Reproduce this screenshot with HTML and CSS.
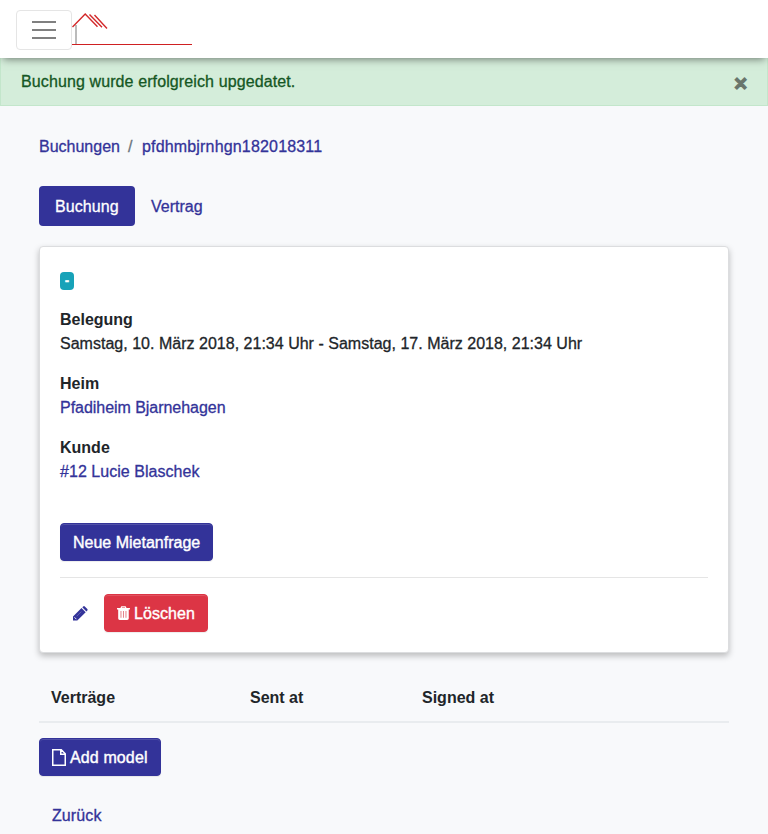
FILE: index.html
```html
<!DOCTYPE html>
<html lang="de">
<head>
<meta charset="utf-8">
<title>Buchung</title>
<link rel="stylesheet" href="styles.css">
</head>
<body>
<nav class="navbar">
  <button class="toggler" aria-label="Menü"><svg width="24" height="20" viewBox="0 0 24 20" stroke="#808080" stroke-width="2"><path d="M0 2H24M0 10H24M0 18H24"/></svg></button>
  <a class="brand" href="#"><svg width="120" height="38" viewBox="0 0 120 38" fill="none"><path d="M4 17V36" stroke="#aaa" stroke-width="1.6"/><path d="M.5 19 13.2 6 25.5 18.7M17.5 6.500 30 19.300M22.500 7 35 20.500" stroke="#d3292b" stroke-width="1.4"/><path d="M0 36.5H120" stroke="#cf2022"/></svg></a>
</nav>
<div class="alert"><span class="message">Buchung wurde erfolgreich upgedatet.</span><button class="close" aria-label="Schliessen"><span>×</span></button></div>
<main class="container">
  <div class="breadcrumb"><a href="#">Buchungen</a><span class="sep">/</span><a class="ref" href="#">pfdhmbjrnhgn182018311</a></div>
  <div class="pills"><a class="pill active" href="#">Buchung</a><a class="pill" href="#">Vertrag</a></div>
  <section class="card">
    <span class="badge">-</span>
    <dl>
      <dt>Belegung</dt><dd class="dates">Samstag, 10. März 2018, 21:34 Uhr - Samstag, 17. März 2018, 21:34 Uhr</dd>
      <dt>Heim</dt><dd><a class="home" href="#">Pfadiheim Bjarnehagen</a></dd>
      <dt>Kunde</dt><dd><a class="customer" href="#">#12 Lucie Blaschek</a></dd>
    </dl>
    <a class="btn w-new" href="#"><span>Neue Mietanfrage</span></a>
    <hr>
    <div class="actions">
      <a class="edit" href="#" aria-label="Bearbeiten"><svg width="15" height="15" viewBox="0 0 15 15"><path d="M0 14.500V10.500L8.500 2l4.200 4.200-8.400 8.300zM9.300 1.200 10.200.4q.8-.6 1.600 0l2.500 2.500q.7.8 0 1.600l-.9 1z" fill="currentColor"/><path d="M1.500 11.300 3.400 13.200" stroke="#fff" stroke-width=".9"/><path d="M3.600 10.300 8.300 5.600" stroke="#8585c4" stroke-width=".6"/></svg></a>
      <a class="btn danger" href="#"><svg width="13" height="16" viewBox="0 0 13 16" fill="none"><path d="M4 3.200 4.700 1.800H8.300L9 3.200" stroke="#fff" stroke-width="1.300"/><path d="M0 3H13V4.600H11.800V13.500Q11.800 15 10.300 15H2.700Q1.200 15 1.200 13.500V4.600H0z" fill="#fff"/><path d="M4 6V12.800M6.500 6V12.800M9 6V12.800" stroke="#e58088" stroke-width="1"/></svg><span>Löschen</span></a>
    </div>
  </section>
  <table>
    <thead><tr><th class="c1">Verträge</th><th class="c2">Sent at</th><th>Signed at</th></tr></thead>
  </table>
  <a class="btn w-add" href="#"><svg width="14" height="17" viewBox="0 0 14 17" fill="none" stroke="currentColor" stroke-width="1.5"><path d="M.75.75H9.300L13.250 4.800V16.250H.75zM8.750 1V5.250H13"/></svg><span>Add model</span></a>
  <div><a class="back" href="#">Zurück</a></div>
</main>
</body>
</html>
```
FILE: styles.css
```css
* { box-sizing: border-box; }
body { margin: 0; height: 834px; overflow: hidden; background: #f8f9fb; color: #212529; font: 16px/24px "Liberation Sans", Arial, sans-serif; -webkit-text-stroke: .3px; }
a { color: #333399; text-decoration: none; }
button { font: inherit; background: none; cursor: pointer; }
.navbar { position: relative; height: 58px; padding: 10px 16px; display: flex; align-items: flex-start; background: #fff; box-shadow: 0 4px 8px -3px rgba(0,0,0,.5); }
.toggler { width: 56px; height: 40px; padding: 0; border: 1px solid #e5e5e5; border-radius: 4px; display: flex; align-items: center; justify-content: center; }
.brand { height: 38px; margin-top: -2px; }
.brand svg, .btn svg, .edit svg { display: block; }
.alert { margin-top: -2px; height: 50px; padding: 2px 20px 0; display: flex; align-items: center; justify-content: space-between; background: #d4edda; border: 1px solid #c3e6cb; color: #155724; }
.message { letter-spacing: .11px; }
.close { border: 0; padding: 0; margin-top: 4px; font-size: 22px; line-height: 24px; font-weight: 700; color: #000; opacity: .5; -webkit-text-stroke: 1.3px; }
.container { padding: 29px 39px 0; }
.breadcrumb { display: flex; gap: 8px; margin-bottom: 27px; }
.sep { color: #6c757d; width: 7px; margin-right: -1px; }
.ref { letter-spacing: .17px; }
.pills { display: flex; margin-bottom: 20px; }
.pill { padding: 9px 16px 7px; border-radius: 4px; }
.pill.active { background: #333399; color: #fff; width: 96px; letter-spacing: .1px; }
.card { height: 407px; padding: 20px; background: #fff; border: 1px solid #dcdddf; border-radius: 4px; box-shadow: 0 3px 6px rgba(0,0,0,.25); }
.badge { display: block; width: 14px; height: 18px; margin-top: 5px; border-radius: 4px; background: #17a2b8; color: #fff; font-size: 12px; line-height: 19px; font-weight: 700; text-align: center; -webkit-text-stroke: .6px; }
dl { margin: 18px 0 39px; }
dt, th { font-weight: 700; -webkit-text-stroke: 0; }
dd { margin: 0 0 16px; }
.dates { letter-spacing: .015px; }
.home { letter-spacing: -.04px; }
.customer { letter-spacing: .04px; }
.btn { display: inline-flex; align-items: center; gap: 4px; height: 38px; padding: 0 12px; border: 1px solid #333399; border-radius: 4px; background: #333399; color: #fff; white-space: nowrap; box-shadow: inset 0 1px 0 rgba(255,255,255,.15), 0 1px 1px rgba(0,0,0,.075); -webkit-text-stroke: .4px; }
.btn span { padding-top: 2px; }
.btn.danger { background: #dc3545; border-color: #dc3545; width: 104px; letter-spacing: .08px; }
.w-new { width: 153px; display: flex; }
.w-add { width: 122px; display: flex; letter-spacing: .12px; }
hr { margin: 16px 0; border: 0; border-top: 1px solid #e5e5e5; }
.actions { display: flex; }
.edit { width: 44px; height: 38px; padding: 12px 0 0 13px; }
table { width: 100%; margin: 20px 0 15px; border-collapse: separate; border-spacing: 0; table-layout: fixed; }
th { padding: 13px 12px 11px; text-align: left; border-bottom: 2px solid #e9ecef; }
.c1 { width: 199px; }
.c2 { width: 172px; }
.back { display: inline-block; padding: 28px 13px 0; letter-spacing: .1px; }
```
